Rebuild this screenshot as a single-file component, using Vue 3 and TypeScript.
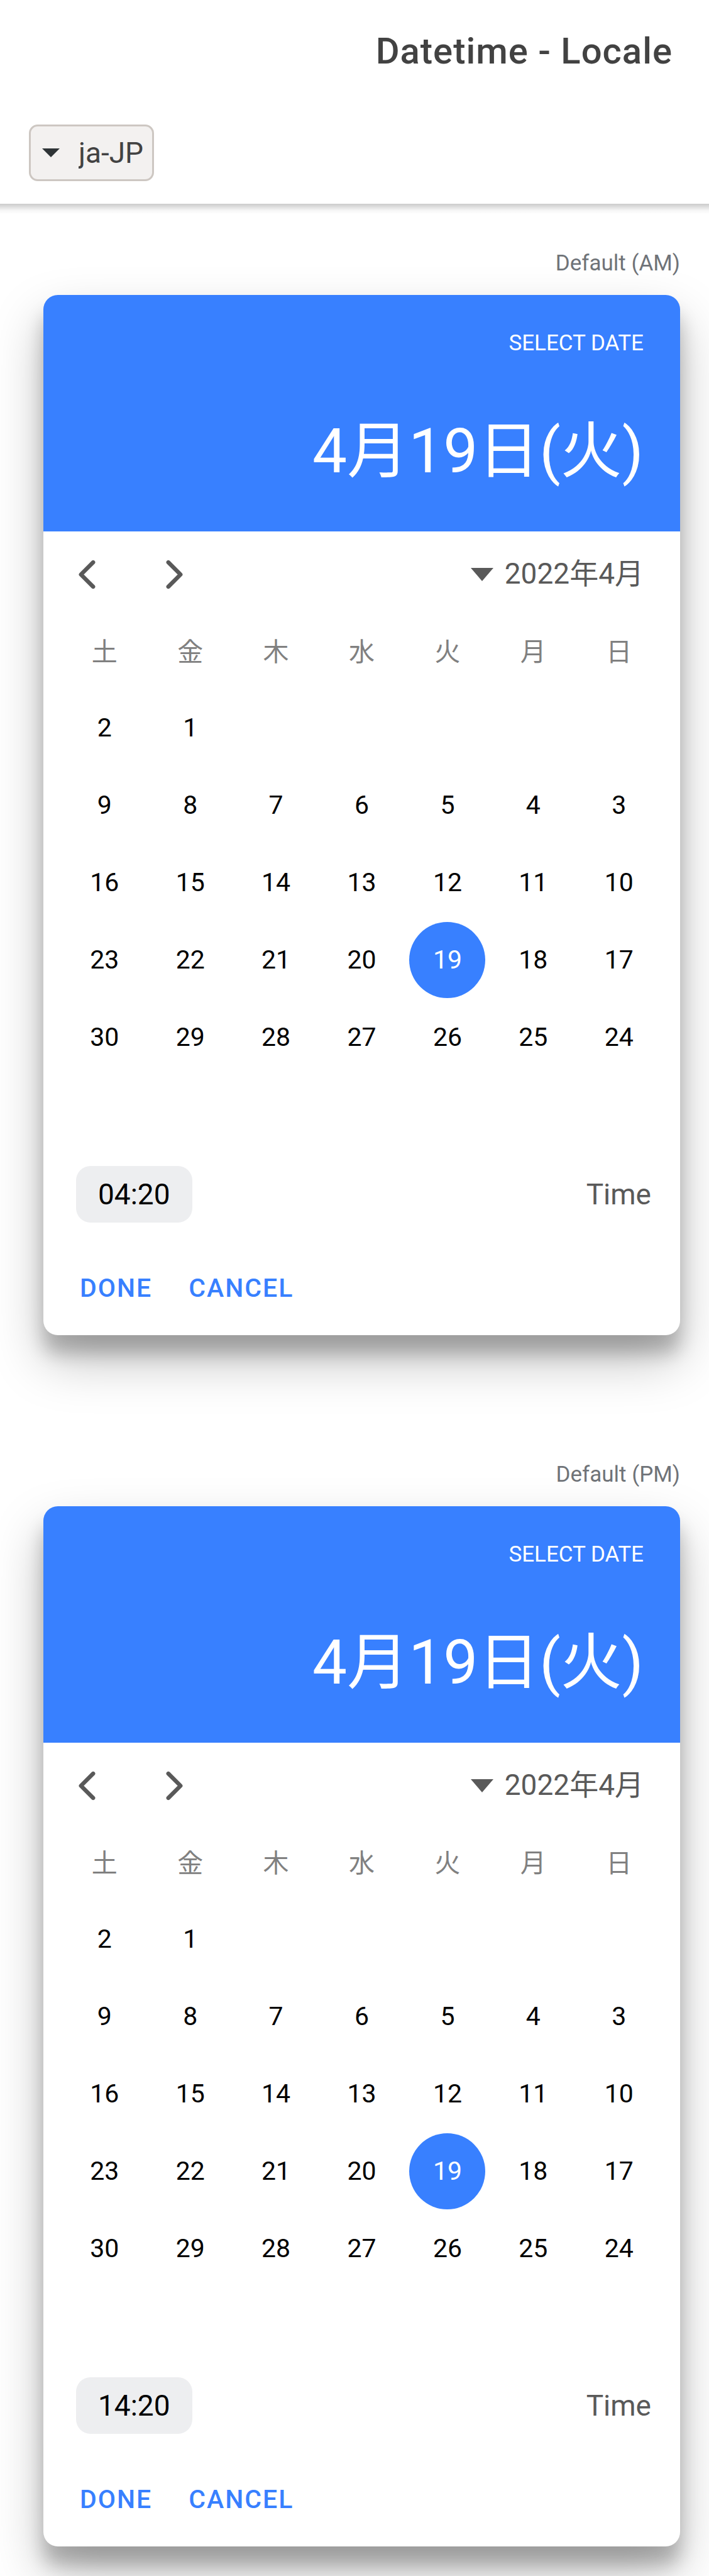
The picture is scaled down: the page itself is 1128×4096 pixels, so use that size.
<script setup lang="ts">
import { ref } from 'vue'

interface Picker {
  id: string
  label: string
  time: string
}

const pickers: Picker[] = [
  { id: 'am', label: 'Default (AM)', time: '04:20' },
  { id: 'pm', label: 'Default (PM)', time: '14:20' },
]

const locale = ref('ja-JP')
const weekdays = ['日', '月', '火', '水', '木', '金', '土']
const selectedDay = 19

// April 2022 starts on a Friday and always shows six rows.
const firstWeekday = 5
const daysInMonth = 30
const weeks: (number | null)[][] = Array.from({ length: 6 }, (_, week) =>
  Array.from({ length: 7 }, (_, column) => {
    const day = week * 7 + column - firstWeekday + 1
    return day >= 1 && day <= daysInMonth ? day : null
  }),
)
</script>

<template>
  <div class="page">
    <header class="header">
      <h1 class="title">Datetime - Locale</h1>
      <div class="toolbar">
        <div class="locale">
          <svg class="locale-arrow" viewBox="0 0 28 14" aria-hidden="true">
            <path d="M0 0h28L14 14z" fill="#2e3436" />
          </svg>
          <select v-model="locale" class="locale-select" aria-label="Locale">
            <option value="ja-JP">ja-JP</option>
          </select>
        </div>
      </div>
    </header>

    <main class="content">
      <section v-for="picker in pickers" :key="picker.id" class="example">
        <h2 class="label">{{ picker.label }}</h2>
        <div class="card">
          <div class="card-header">
            <div class="card-caption">SELECT DATE</div>
            <div class="card-date">4月19日(火)</div>
          </div>

          <div class="month-bar">
            <div class="arrows">
              <button type="button" class="arrow" aria-label="Next month">
                <svg viewBox="0 0 512 512"><path d="M328 112L184 256l144 144" /></svg>
              </button>
              <button type="button" class="arrow" aria-label="Previous month">
                <svg viewBox="0 0 512 512"><path d="M184 112l144 144-144 144" /></svg>
              </button>
            </div>
            <button type="button" class="month">
              <svg class="month-arrow" viewBox="0 0 36 21" aria-hidden="true">
                <path d="M0 0h36L18 21z" fill="#595959" />
              </svg>
              <span class="month-name">2022年4月</span>
            </button>
          </div>

          <table class="calendar" dir="rtl">
            <thead>
              <tr>
                <th v-for="name in weekdays" :key="name" scope="col">{{ name }}</th>
              </tr>
            </thead>
            <tbody>
              <tr v-for="(week, index) in weeks" :key="index">
                <td v-for="(day, column) in week" :key="column">
                  <button
                    v-if="day !== null"
                    type="button"
                    class="day"
                    :class="{ selected: day === selectedDay }"
                  >
                    {{ day }}
                  </button>
                </td>
              </tr>
            </tbody>
          </table>

          <div class="time-row">
            <button :id="`time-${picker.id}`" type="button" class="time">{{ picker.time }}</button>
            <label :for="`time-${picker.id}`">Time</label>
          </div>

          <div class="actions">
            <button type="button" class="action">DONE</button>
            <button type="button" class="action">CANCEL</button>
          </div>
        </div>
      </section>
    </main>
  </div>
</template>

<style>
body {
  margin: 0;
  background: #fff;
}
</style>

<style scoped>
.page {
  overflow: hidden;
  font-family: Roboto, 'Noto Sans CJK JP', sans-serif;
  font-size: 46px;
  color: #424242;
  background: #fff;
}

button,
select {
  margin: 0;
  padding: 0;
  border: 0;
  background: none;
  font: inherit;
  color: inherit;
}

.header {
  position: relative;
}

.header::after {
  content: '';
  position: absolute;
  top: 100%;
  left: 0;
  right: 0;
  height: 15px;
  background: linear-gradient(#cbcbcb, #e3e3e3 40%, #f8f8f8 75%, #fcfcfc);
}

.title {
  margin: 0;
  padding: 0 58px;
  text-align: right;
  font-size: 58px;
  font-weight: 500;
  line-height: 162px;
  letter-spacing: 1px;
}

.toolbar {
  display: flex;
  align-items: center;
  height: 162px;
  padding: 0 46px;
}

.locale {
  display: flex;
  align-items: center;
  box-sizing: border-box;
  height: 90px;
  padding: 0 13px 0 18px;
  border: 3px solid #cdc7c2;
  border-radius: 14px;
  background: #f3f1f0;
  gap: 30px;
}

.locale-arrow {
  width: 28px;
  height: 14px;
}

.locale-select {
  appearance: none;
}

.content {
  padding: 0 46px 47px 69px;
}

.example {
  padding-top: 74px;
}

.example + .example {
  padding-top: 201px;
}

.label {
  margin: 0 0 29px;
  text-align: right;
  font-size: 35px;
  line-height: 42px;
  font-weight: 400;
  color: #6f7378;
}

.card {
  overflow: hidden;
  border-radius: 23px;
  background: #fff;
  box-shadow:
    0 40px 81px rgba(0, 0, 0, 0.25),
    0 29px 29px rgba(0, 0, 0, 0.22);
}

.card-header {
  padding: 56px 58px 63px;
  background: #3880ff;
  color: #fff;
  text-align: right;
}

.card-caption {
  font-size: 35px;
  line-height: 42px;
}

.card-date {
  margin-top: 87px;
  font-size: 98px;
  line-height: 128px;
}

.month-bar {
  display: flex;
  align-items: center;
  justify-content: space-between;
  height: 137px;
  padding: 0 58px 0 35px;
  color: #595959;
}

.arrows {
  display: flex;
  gap: 70px;
}

.arrow {
  width: 69px;
  height: 69px;
}

.arrow svg {
  display: block;
  width: 69px;
  height: 69px;
  fill: none;
  stroke: #595959;
  stroke-width: 48;
  stroke-linecap: round;
  stroke-linejoin: round;
}

.month {
  display: flex;
  align-items: center;
  gap: 18px;
  line-height: 60px;
}

.month-arrow {
  width: 36px;
  height: 21px;
}

.month-name {
  padding-bottom: 4px;
}

.calendar {
  width: calc(100% - 58px);
  margin: 0 29px;
  table-layout: fixed;
  border-collapse: collapse;
  font-size: 41px;
  color: #000;
}

.calendar th {
  box-sizing: border-box;
  height: 114px;
  padding: 0 0 4px;
  font-weight: 400;
  line-height: 60px;
  color: #808080;
}

.calendar td {
  height: 123px;
  padding: 0;
  text-align: center;
}

.day {
  display: block;
  width: 121px;
  height: 121px;
  margin: 0 auto;
  border-radius: 50%;
  line-height: 121px;
}

.day.selected {
  background: #3880ff;
  color: #fff;
}

.time-row {
  display: flex;
  align-items: center;
  justify-content: space-between;
  margin-top: 20px;
  padding: 0 46px 0 52px;
  color: #595959;
}

.time {
  padding: 0 35px;
  border-radius: 23px;
  background: #edeef0;
  color: #000;
  line-height: 90px;
}

.actions {
  display: flex;
  gap: 58px;
  padding: 76px 58px 47px;
}

.action {
  font-size: 41px;
  font-weight: 500;
  line-height: 56px;
  letter-spacing: 2px;
  color: #3880ff;
}
</style>
